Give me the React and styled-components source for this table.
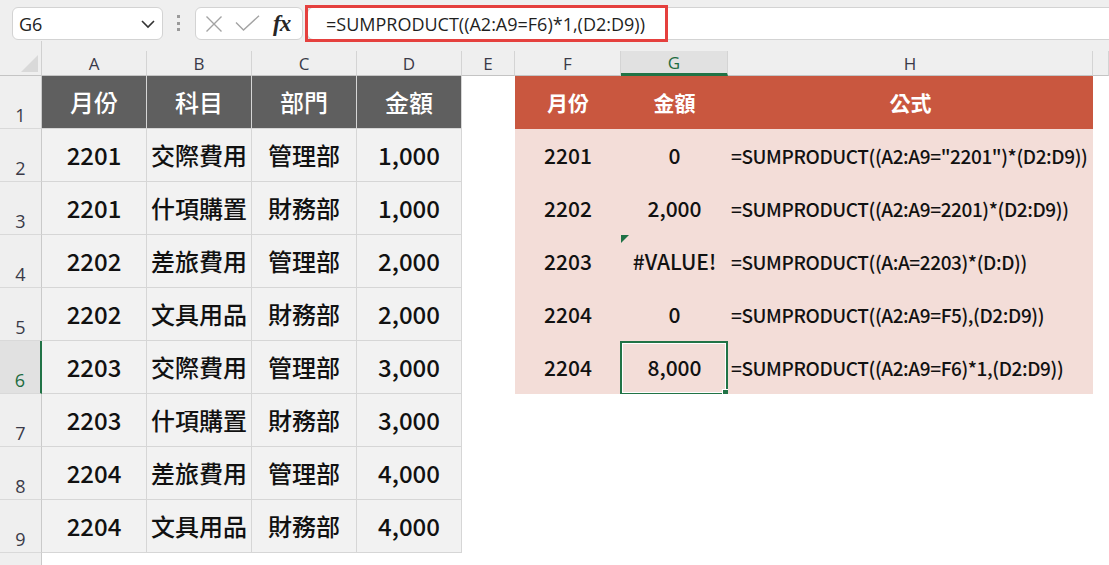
import React from 'react';
import styled, { createGlobalStyle, css } from 'styled-components';

const GlobalStyle = createGlobalStyle`
  html, body { margin: 0; padding: 0; background: #fff; overflow: hidden; }
  body { font-family: "Noto Sans CJK TC", "Noto Sans", sans-serif; }
  * { box-sizing: border-box; }
`;

const Page = styled.div`
  width: 1109px;
  height: 565px;
  overflow: hidden;
  display: flex;
  flex-direction: column;
  background: #fff;
`;

const Toolbar = styled.div`
  flex: none;
  height: 41px;
  background: #efefef;
  display: flex;
  align-items: flex-start;
  padding: 7px 0 0 12px;
  font-family: "Open Sans", "Noto Sans", sans-serif;
`;

const NameBox = styled.div`
  width: 151px;
  height: 33px;
  background: #fff;
  border: 1px solid #d3d3d3;
  border-radius: 6px;
  display: flex;
  align-items: center;
  justify-content: space-between;
  padding: 0 6px 0 6px;
  font-size: 18px;
  color: #222;
`;

const Dots = styled.div`
  margin: 8px 0 0 14px;
  display: flex;
  flex-direction: column;
  gap: 3.5px;
  & > span {
    width: 3px;
    height: 3px;
    background: #9a9a9a;
  }
`;

const FxBox = styled.div`
  margin-left: 15px;
  width: 108px;
  height: 33px;
  background: #fff;
  border: 1px solid #d3d3d3;
  border-radius: 6px;
  display: flex;
  align-items: center;
  padding-left: 9px;
  gap: 12px;
`;

const FxLabel = styled.span`
  font-family: "Liberation Serif", "DejaVu Serif", serif;
  font-style: italic;
  font-weight: 700;
  font-size: 23px;
  color: #262626;
  margin-left: 1px;
  letter-spacing: -1px;
`;

const FormulaInput = styled.div`
  margin-left: 4px;
  flex: 1;
  height: 33px;
  background: #fff;
  border: 1px solid #d3d3d3;
  border-right: none;
  border-radius: 6px 0 0 6px;
  position: relative;
  display: flex;
  align-items: center;
  padding-left: 18px;
  font-size: 18px;
  color: #1f1f1f;
`;

const Highlight = styled.div`
  position: absolute;
  left: -3px;
  top: -3px;
  width: 363px;
  height: 37px;
  border: 3px solid #e5403e;
  pointer-events: none;
`;

const Sheet = styled.div`
  flex: none;
  display: grid;
  grid-template-columns: 42px 105px 105px 105px 105px 53px 106px 107px 365px 1fr;
  grid-template-rows: 35px repeat(10, 53px);
`;

const Corner = styled.div`
  background: #efefef;
  display: flex;
  justify-content: flex-end;
  align-items: flex-end;
  padding: 0 3px 3px 0;
  border-right: 1px solid #d0d0d0;
  border-bottom: 1px solid #c4c4c4;
`;

const SelectAll = styled.div`
  width: 17px;
  height: 17px;
  background: #d9d9d9;
  clip-path: polygon(100% 0, 100% 100%, 0 100%);
`;

const ColHeader = styled.div`
  background: #efefef;
  display: flex;
  align-items: flex-end;
`;

const ColLabel = styled.div`
  flex: 1;
  height: 25px;
  display: flex;
  align-items: center;
  justify-content: center;
  border-right: 1px solid #d4d4d4;
  border-bottom: 1px solid #c4c4c4;
  font-family: "Open Sans", "Noto Sans", sans-serif;
  font-size: 17px;
  color: #3a3a48;
  ${(p) =>
    p.$selected &&
    css`
      background: #e1e1e1;
      border-bottom: 3px solid #217346;
      color: #1d6b40;
    `}
`;

const RowHeader = styled.div`
  background: ${(p) => (p.$selected ? '#e1e1e1' : '#efefef')};
  border-right: ${(p) => (p.$selected ? '2px solid #217346' : '1px solid #cacaca')};
  border-bottom: 1px solid #d9d9d9;
  display: flex;
  align-items: flex-end;
  justify-content: center;
  padding-bottom: 4px;
  font-family: "Open Sans", "Noto Sans", sans-serif;
  font-size: 18px;
  line-height: 1;
  color: ${(p) => (p.$selected ? '#1d6b40' : '#3a3a48')};
`;

const kinds = {
  lhead: css`
    background: #5f5f5f;
    color: #fff;
    font-size: 24px;
    font-weight: 500;
    border-right: 1px solid #d6d6d6;
    border-bottom: 1px solid #d6d6d6;
  `,
  ldata: css`
    background: #f2f2f2;
    color: #111;
    font-size: 24px;
    font-weight: 500;
    border-right: 1px solid #d6d6d6;
    border-bottom: 1px solid #d6d6d6;
  `,
  rhead: css`
    background: #c9573f;
    color: #fff;
    font-size: 21px;
    font-weight: 700;
  `,
  rdata: css`
    background: #f3ddd8;
    color: #111;
    font-size: 21px;
    font-weight: 500;
  `,
  rformula: css`
    background: #f3ddd8;
    color: #111;
    font-size: 19px;
    font-weight: 500;
    letter-spacing: -0.4px;
    justify-content: flex-start;
    padding-left: 3px;
  `,
  blank: css`
    background: #fff;
  `,
};

const Cell = styled.div`
  position: relative;
  display: flex;
  align-items: center;
  justify-content: center;
  white-space: nowrap;
  line-height: 1;
  ${(p) => kinds[p.$kind || 'blank']}
`;

const ErrorMark = styled.span`
  position: absolute;
  left: 0;
  top: 0;
  width: 0;
  height: 0;
  border-top: 8px solid #1e7145;
  border-right: 8px solid transparent;
`;

const SelectionFrame = styled.span`
  position: absolute;
  left: -1px;
  top: 0;
  right: 0;
  bottom: -1px;
  border: 2px solid #217346;
  box-shadow: inset 0 0 0 1px #fff;
  pointer-events: none;
  &::after {
    content: '';
    position: absolute;
    right: -5px;
    bottom: -5px;
    width: 7px;
    height: 7px;
    background: #217346;
    border: 1px solid #fff;
  }
`;

const COLS = ['A', 'B', 'C', 'D', 'E', 'F', 'G', 'H', ''];

const left = [
  ['2201', '交際費用', '管理部', '1,000'],
  ['2201', '什項購置', '財務部', '1,000'],
  ['2202', '差旅費用', '管理部', '2,000'],
  ['2202', '文具用品', '財務部', '2,000'],
  ['2203', '交際費用', '管理部', '3,000'],
  ['2203', '什項購置', '財務部', '3,000'],
  ['2204', '差旅費用', '管理部', '4,000'],
  ['2204', '文具用品', '財務部', '4,000'],
];

const right = [
  ['2201', '0', '=SUMPRODUCT((A2:A9="2201")*(D2:D9))'],
  ['2202', '2,000', '=SUMPRODUCT((A2:A9=2201)*(D2:D9))'],
  ['2203', '#VALUE!', '=SUMPRODUCT((A:A=2203)*(D:D))'],
  ['2204', '0', '=SUMPRODUCT((A2:A9=F5),(D2:D9))'],
  ['2204', '8,000', '=SUMPRODUCT((A2:A9=F6)*1,(D2:D9))'],
];

function ChevronIcon() {
  return (
    <svg width="16" height="10" viewBox="0 0 16 10">
      <path d="M2 2 L8 8 L14 2" fill="none" stroke="#333" strokeWidth="1.6" />
    </svg>
  );
}

function CancelIcon() {
  return (
    <svg width="18" height="18" viewBox="0 0 18 18">
      <path d="M1.5 1.5 L16.5 16.5 M16.5 1.5 L1.5 16.5" stroke="#a3a3a3" strokeWidth="1.4" fill="none" />
    </svg>
  );
}

function EnterIcon() {
  return (
    <svg width="25" height="17" viewBox="0 0 25 17">
      <path d="M1 7.5 L8.5 15 L24 0.8" stroke="#a3a3a3" strokeWidth="1.4" fill="none" />
    </svg>
  );
}

function buildRow(r) {
  const cells = [];
  for (let c = 0; c < 9; c++) {
    let kind = 'blank';
    let text = '';
    let extra = null;
    if (c <= 3) {
      if (r === 1) {
        kind = 'lhead';
        text = ['月份', '科目', '部門', '金額'][c];
      } else if (r <= 9) {
        kind = 'ldata';
        text = left[r - 2][c];
      }
    } else if (c >= 5 && c <= 7) {
      if (r === 1) {
        kind = 'rhead';
        text = ['月份', '金額', '公式'][c - 5];
      } else if (r <= 6) {
        kind = c === 7 ? 'rformula' : 'rdata';
        text = right[r - 2][c - 5];
        if (c === 6 && r === 4) extra = <ErrorMark />;
        if (c === 6 && r === 6) extra = <SelectionFrame />;
      }
    }
    cells.push(
      <Cell key={`${r}-${c}`} $kind={kind}>
        {extra}
        {text}
      </Cell>
    );
  }
  return cells;
}

export default function App() {
  const rows = [];
  for (let r = 1; r <= 10; r++) {
    rows.push(
      <RowHeader key={`rh${r}`} $selected={r === 6}>
        {r < 10 ? r : ''}
      </RowHeader>
    );
    rows.push(...buildRow(r));
  }
  return (
    <>
      <GlobalStyle />
      <Page>
        <Toolbar>
          <NameBox>
            <span>G6</span>
            <ChevronIcon />
          </NameBox>
          <Dots>
            <span />
            <span />
            <span />
          </Dots>
          <FxBox>
            <CancelIcon />
            <EnterIcon />
            <FxLabel>fx</FxLabel>
          </FxBox>
          <FormulaInput>
            <Highlight />
            =SUMPRODUCT((A2:A9=F6)*1,(D2:D9))
          </FormulaInput>
        </Toolbar>
        <Sheet>
          <Corner>
            <SelectAll />
          </Corner>
          {COLS.map((c, i) => (
            <ColHeader key={`ch${i}`}>
              <ColLabel $selected={c === 'G'}>{c}</ColLabel>
            </ColHeader>
          ))}
          {rows}
        </Sheet>
      </Page>
    </>
  );
}
